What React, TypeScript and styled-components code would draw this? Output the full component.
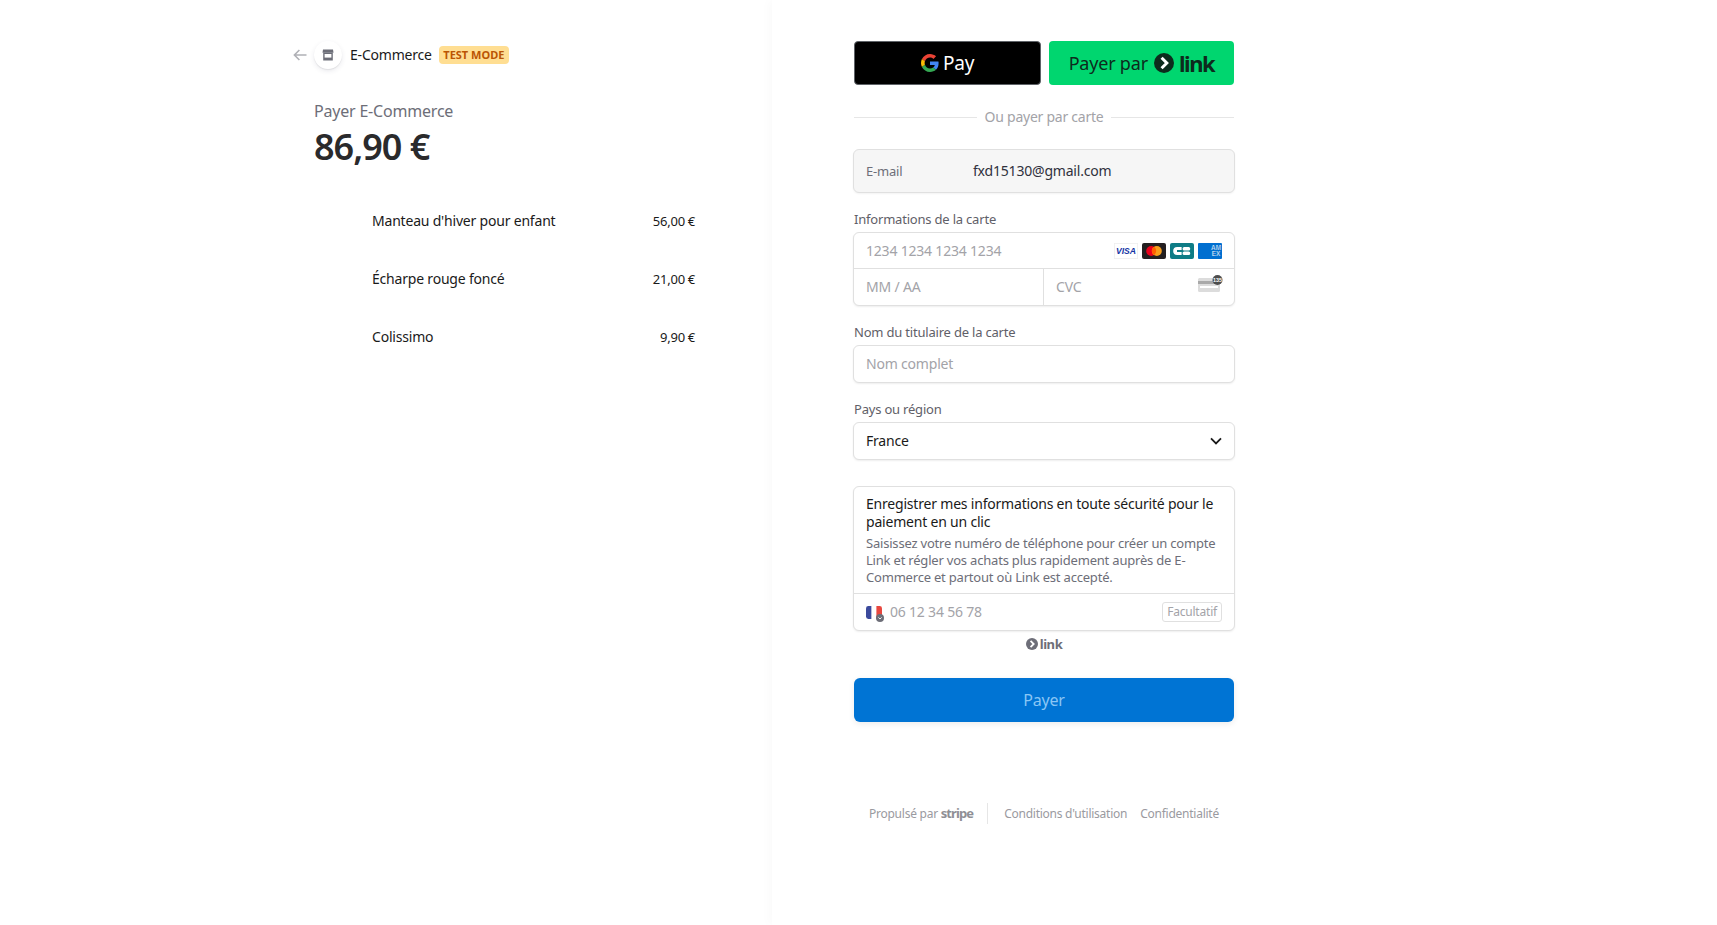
import React from 'react'
import styled, { createGlobalStyle } from 'styled-components'

const GlobalStyle = createGlobalStyle`
  html, body {
    margin: 0;
    padding: 0;
    background: #fff;
  }
  body {
    font-family: 'Noto Sans', 'Open Sans', sans-serif;
    color: #1a1a1a;
    letter-spacing: -0.2px;
  }
  * {
    box-sizing: border-box;
  }
`

const items = [
  { name: "Manteau d'hiver pour enfant", price: '56,00 €' },
  { name: 'Écharpe rouge foncé', price: '21,00 €' },
  { name: 'Colissimo', price: '9,90 €' }
]

const GoogleG = () => (
  <svg width="18" height="18" viewBox="0 0 48 48">
    <path fill="#EA4335" d="M24 9.5c3.5 0 6.7 1.2 9.2 3.6l6.9-6.9C35.9 2.4 30.5 0 24 0 14.6 0 6.5 5.4 2.6 13.2l8 6.2C12.4 13.7 17.7 9.5 24 9.5z" />
    <path fill="#4285F4" d="M46.9 24.5c0-1.6-.1-3.1-.4-4.5H24v9h12.9c-.6 3-2.2 5.5-4.7 7.2l7.7 6c4.5-4.2 7-10.3 7-17.7z" />
    <path fill="#FBBC05" d="M10.5 28.6c-.5-1.4-.8-3-.8-4.6s.3-3.2.8-4.6l-8-6.2C.9 16.5 0 20.1 0 24s.9 7.5 2.6 10.8l7.9-6.2z" />
    <path fill="#34A853" d="M24 48c6.5 0 11.9-2.1 15.9-5.8l-7.7-6c-2.2 1.4-4.9 2.3-8.2 2.3-6.3 0-11.6-4.2-13.5-10l-8 6.2C6.5 42.6 14.6 48 24 48z" />
  </svg>
)

const LinkMark = ({ size, color, arrow }: { size: number; color: string; arrow: string }) => (
  <svg width={size} height={size} viewBox="0 0 20 20">
    <circle cx="10" cy="10" r="10" fill={color} />
    <path d="M7.6 4.8 L12.8 10 L7.6 15.2" fill="none" stroke={arrow} strokeWidth="3" />
  </svg>
)

const StoreIcon = () => (
  <svg width="12" height="12" viewBox="0 0 12 12">
    <path d="M1 0.5h10l0.5 3.2H0.5z" fill="#6d6e78" />
    <path d="M1.2 3.7h9.6v7.8H1.2z" fill="#6d6e78" />
    <path d="M2.6 5h6.8v3.6H2.6z" fill="#fff" />
  </svg>
)

const BackArrow = () => (
  <svg width="14" height="12" viewBox="0 0 14 12">
    <path d="M13.5 6H1.5M6.4 1 1.4 6l5 5" fill="none" stroke="#b0b1b6" strokeWidth="1.6" />
  </svg>
)

const VisaIcon = () => (
  <svg width="24" height="16" viewBox="0 0 24 16">
    <rect x="0.25" y="0.25" width="23.5" height="15.5" rx="1" fill="#fff" stroke="#d9d9d9" strokeWidth="0.5" />
    <text x="12" y="11" textAnchor="middle" fontFamily="'Liberation Sans', sans-serif" fontSize="8.6" fontWeight="700" fontStyle="italic" letterSpacing="0" fill="#1434a4">VISA</text>
  </svg>
)

const MastercardIcon = () => (
  <svg width="24" height="16" viewBox="0 0 24 16">
    <rect width="24" height="16" rx="2" fill="#231f20" />
    <circle cx="9.2" cy="8" r="5" fill="#eb001b" />
    <circle cx="14.8" cy="8" r="5" fill="#f79e1b" />
    <path d="M12 3.85a5 5 0 0 1 0 8.3a5 5 0 0 1 0-8.3z" fill="#ff5f00" />
  </svg>
)

const CbIcon = () => (
  <svg width="24" height="16" viewBox="0 0 24 16">
    <rect width="24" height="16" rx="2" fill="#0e7c86" />
    <path d="M11.6 4h-4.4a4 4 0 0 0 0 8h4.4z" fill="#fff" />
    <rect x="12.6" y="4" width="7.6" height="3.6" rx="1.6" fill="#fff" />
    <rect x="12.6" y="8.4" width="7.6" height="3.6" rx="1.6" fill="#fff" />
    <rect x="7" y="7" width="5" height="2" fill="#0e7c86" />
  </svg>
)

const AmexIcon = () => (
  <svg width="24" height="16" viewBox="0 0 24 16">
    <rect width="24" height="16" rx="1" fill="#016fd0" />
    <text x="18" y="7.4" textAnchor="middle" fontFamily="'Liberation Sans', sans-serif" fontSize="6.4" fontWeight="700" letterSpacing="0" fill="#e3eff9" stroke="#016fd0" strokeWidth="0.2">AM</text>
    <text x="18" y="13.2" textAnchor="middle" fontFamily="'Liberation Sans', sans-serif" fontSize="6.4" fontWeight="700" letterSpacing="0" fill="#e3eff9" stroke="#016fd0" strokeWidth="0.2">EX</text>
  </svg>
)

const CvcIcon = () => (
  <svg width="26" height="18" viewBox="0 0 26 18">
    <rect x="1" y="3" width="22" height="14" rx="1.5" fill="#dcdcdc" />
    <rect x="1" y="6" width="22" height="3" fill="#a9a9a9" />
    <rect x="3" y="11" width="18" height="2" fill="#fff" />
    <circle cx="20.5" cy="5" r="5" fill="#4d4d4d" />
    <text x="20.5" y="7" textAnchor="middle" fontFamily="'Liberation Sans', sans-serif" fontSize="5.4" fontWeight="700" letterSpacing="0" fill="#fff">135</text>
  </svg>
)

const FlagFr = () => (
  <FlagWrap>
    <svg width="16" height="13" viewBox="0 0 16 13">
      <defs>
        <clipPath id="flag-clip">
          <rect width="16" height="13" rx="2.4" />
        </clipPath>
      </defs>
      <g clipPath="url(#flag-clip)">
        <rect width="5.6" height="13" fill="#3b4a9c" />
        <rect x="5.6" width="4.8" height="13" fill="#fff" />
        <rect x="10.4" width="5.6" height="13" fill="#e8473f" />
      </g>
    </svg>
    <FlagBadge>
      <svg width="8" height="8" viewBox="0 0 8 8">
        <circle cx="4" cy="4" r="4" fill="#6d6e78" />
        <path d="M2.4 3.4 4 5l1.6-1.6" fill="none" stroke="#fff" strokeWidth="0.9" />
      </svg>
    </FlagBadge>
  </FlagWrap>
)

const Chevron = () => (
  <svg width="12" height="8" viewBox="0 0 12 8">
    <path d="M1 1.4 6 6.4l5-5" fill="none" stroke="#1a1a1a" strokeWidth="1.8" />
  </svg>
)

const App: React.FC = () => {
  return (
    <>
      <GlobalStyle />
      <Page>
        <Overview>
          <Header>
            <BackArrow />
            <StoreBubble>
              <StoreIcon />
            </StoreBubble>
            <MerchantName>E-Commerce</MerchantName>
            <TestBadge>TEST MODE</TestBadge>
          </Header>
          <Summary>
            <PayLabel>Payer E-Commerce</PayLabel>
            <Amount>86,90 €</Amount>
          </Summary>
          <ItemList>
            {items.map((item) => (
              <ItemRow key={item.name}>
                <ItemName>{item.name}</ItemName>
                <ItemPrice>{item.price}</ItemPrice>
              </ItemRow>
            ))}
          </ItemList>
        </Overview>

        <Payment>
          <Column>
            <ExpressRow>
              <GPayButton>
                <GoogleG />
                <GPayText>Pay</GPayText>
              </GPayButton>
              <LinkButton>
                Payer par
                <LinkMark size={20} color="#0d2b1d" arrow="#fff" />
                <LinkWord>link</LinkWord>
              </LinkButton>
            </ExpressRow>

            <OrDivider>
              <OrLine />
              <OrText>Ou payer par carte</OrText>
              <OrLine />
            </OrDivider>

            <EmailBox>
              <EmailLabel>E-mail</EmailLabel>
              <EmailValue>fxd15130@gmail.com</EmailValue>
            </EmailBox>

            <FieldLabel>Informations de la carte</FieldLabel>
            <Box>
              <CardRow>
                <Placeholder>1234 1234 1234 1234</Placeholder>
                <CardIcons>
                  <VisaIcon />
                  <MastercardIcon />
                  <CbIcon />
                  <AmexIcon />
                </CardIcons>
              </CardRow>
              <SplitRow>
                <SplitCell>
                  <Placeholder>MM / AA</Placeholder>
                </SplitCell>
                <SplitCell $divided>
                  <Placeholder>CVC</Placeholder>
                  <CvcSlot>
                    <CvcIcon />
                  </CvcSlot>
                </SplitCell>
              </SplitRow>
            </Box>

            <FieldLabel>Nom du titulaire de la carte</FieldLabel>
            <InputBox>
              <Placeholder>Nom complet</Placeholder>
            </InputBox>

            <FieldLabel>Pays ou région</FieldLabel>
            <InputBox>
              <SelectValue>France</SelectValue>
              <Chevron />
            </InputBox>

            <LinkBox>
              <LinkCopy>
                <LinkTitle>Enregistrer mes informations en toute sécurité pour le paiement en un clic</LinkTitle>
                <LinkText>
                  Saisissez votre numéro de téléphone pour créer un compte Link et régler vos achats plus rapidement auprès de E-Commerce et partout où Link est accepté.
                </LinkText>
              </LinkCopy>
              <PhoneRow>
                <FlagFr />
                <PhonePlaceholder>06 12 34 56 78</PhonePlaceholder>
                <OptionalTag>Facultatif</OptionalTag>
              </PhoneRow>
            </LinkBox>

            <LinkFooter>
              <LinkMark size={12} color="#6d6e78" arrow="#fff" />
              <LinkFooterWord>link</LinkFooterWord>
            </LinkFooter>

            <PayButton>Payer</PayButton>

            <Footer>
              <PoweredBy>
                Propulsé par <StripeWord>stripe</StripeWord>
              </PoweredBy>
              <FooterSep />
              <FooterLinks>
                <span>Conditions d'utilisation</span>
                <span>Confidentialité</span>
              </FooterLinks>
            </Footer>
          </Column>
        </Payment>
      </Page>
    </>
  )
}

const Page = styled.div`
  display: flex;
  width: 100%;
  height: 925px;
  overflow: hidden;
  background: #fff;
`

const Overview = styled.div`
  width: 772px;
  flex-shrink: 0;
  padding: 41px 77px 0 293px;
`

const Header = styled.div`
  display: flex;
  align-items: center;
  height: 28px;
`

const StoreBubble = styled.div`
  width: 28px;
  height: 28px;
  margin-left: 7px;
  border-radius: 50%;
  background: #fff;
  box-shadow: 0 2px 5px rgba(50, 50, 93, 0.1), 0 1px 1px rgba(0, 0, 0, 0.07);
  display: flex;
  align-items: center;
  justify-content: center;
`

const MerchantName = styled.div`
  margin-left: 8px;
  padding-bottom: 1px;
  font-size: 14px;
  color: #1a1a1a;
`

const TestBadge = styled.div`
  margin-left: 7px;
  width: 70px;
  height: 18px;
  border-radius: 4px;
  background: #ffde92;
  color: #bb5504;
  font-size: 11px;
  font-weight: 700;
  letter-spacing: 0;
  line-height: 18px;
  text-align: center;
  white-space: nowrap;
`

const Summary = styled.div`
  padding: 30px 0 0 21px;
`

const PayLabel = styled.div`
  font-size: 16px;
  line-height: 24px;
  color: #6d6e78;
`

const Amount = styled.div`
  margin-top: 2px;
  font-size: 36px;
  line-height: 44px;
  font-weight: 600;
  letter-spacing: -1px;
  color: #2a2a2c;
`

const ItemList = styled.div`
  margin-top: 23px;
  padding-left: 79px;
`

const ItemRow = styled.div`
  display: flex;
  justify-content: space-between;
  align-items: center;
  height: 58px;
  padding-bottom: 2px;
`

const ItemName = styled.div`
  font-size: 14px;
  color: #1a1a1a;
`

const ItemPrice = styled.div`
  padding-top: 1px;
  font-size: 13px;
  word-spacing: -0.5px;
  color: #1a1a1a;
`

const Payment = styled.div`
  flex: 1;
  padding: 41px 0 0 81px;
  background: #fff;
  box-shadow: -3px 0 10px rgba(0, 0, 0, 0.025);
`

const Column = styled.div`
  width: 382px;
`

const ExpressRow = styled.div`
  display: flex;
  gap: 8px;
  padding: 0 1px;
`

const GPayButton = styled.div`
  flex: 1;
  height: 44px;
  border-radius: 4px;
  background: #000;
  border: 1px solid #5f6368;
  display: flex;
  align-items: center;
  justify-content: center;
  gap: 4px;
`

const GPayText = styled.span`
  color: #fff;
  font-size: 19px;
  line-height: 24px;
`

const LinkButton = styled.div`
  flex: 1;
  height: 44px;
  border-radius: 4px;
  background: #00d66f;
  color: #0d2b1d;
  font-size: 18px;
  display: flex;
  align-items: center;
  justify-content: center;
  gap: 6px;
`

const LinkWord = styled.span`
  font-size: 22px;
  font-weight: 700;
  line-height: 24px;
  letter-spacing: -1.4px;
  margin-left: -1px;
`

const OrDivider = styled.div`
  display: flex;
  align-items: center;
  height: 20px;
  margin-top: 22px;
  padding: 0 1px;
`

const OrLine = styled.div`
  flex: 1;
  height: 1px;
  background: #e6e6e6;
`

const OrText = styled.div`
  margin: 0 8px;
  padding-bottom: 2px;
  font-size: 14px;
  letter-spacing: -0.25px;
  color: #a3a3a8;
`

const EmailBox = styled.div`
  display: flex;
  align-items: center;
  height: 44px;
  margin-top: 22px;
  padding: 0 12px 1px;
  background: #f6f6f6;
  border: 1px solid #e0e0e0;
  border-radius: 6px;
  box-shadow: 0 1px 2px rgba(0, 0, 0, 0.05);
`

const EmailLabel = styled.div`
  width: 107px;
  font-size: 13px;
  color: #6d6e78;
`

const EmailValue = styled.div`
  font-size: 14px;
  color: #30313d;
`

const FieldLabel = styled.div`
  height: 16px;
  margin-top: 18px;
  margin-bottom: 5px;
  padding-left: 1px;
  font-size: 13px;
  line-height: 16px;
  color: #5f6068;
`

const Box = styled.div`
  background: #fff;
  border: 1px solid #e0e0e0;
  border-radius: 6px;
  box-shadow: 0 1px 2px rgba(0, 0, 0, 0.07);
  overflow: hidden;
`

const CardRow = styled.div`
  display: flex;
  align-items: center;
  justify-content: space-between;
  height: 36px;
  padding: 0 12px;
  border-bottom: 1px solid #e0e0e0;
`

const Placeholder = styled.div`
  padding-bottom: 1px;
  font-size: 14px;
  color: #a3a3a8;
`

const CardIcons = styled.div`
  display: flex;
  gap: 4px;
`

const SplitRow = styled.div`
  display: grid;
  grid-template-columns: 189px 1fr;
  height: 36px;
`

const SplitCell = styled.div<{ $divided?: boolean }>`
  display: flex;
  align-items: center;
  justify-content: space-between;
  padding: 0 12px;
  border-left: ${(p) => (p.$divided ? '1px solid #e0e0e0' : 'none')};
`

const CvcSlot = styled.div`
  display: flex;
  margin: -6px -1px 0 0;
`

const InputBox = styled(Box)`
  display: flex;
  align-items: center;
  justify-content: space-between;
  height: 38px;
  padding: 0 12px;
`

const SelectValue = styled.div`
  padding-bottom: 1px;
  font-size: 14px;
  color: #1a1a1a;
`

const LinkBox = styled(Box)`
  margin-top: 26px;
`

const LinkCopy = styled.div`
  padding: 8px 12px 0;
  height: 107px;
  border-bottom: 1px solid #e0e0e0;
`

const LinkTitle = styled.div`
  font-size: 14px;
  line-height: 18px;
  color: #1a1a1a;
`

const LinkText = styled.div`
  margin-top: 4px;
  font-size: 13px;
  line-height: 17px;
  color: #6d6e78;
`

const PhoneRow = styled.div`
  display: flex;
  align-items: center;
  height: 36px;
  padding: 0 12px;
`

const FlagWrap = styled.div`
  position: relative;
  display: flex;
  width: 16px;
  height: 13px;
`

const FlagBadge = styled.div`
  position: absolute;
  right: -2px;
  bottom: -3px;
  display: flex;
`

const PhonePlaceholder = styled.div`
  flex: 1;
  margin-left: 8px;
  padding-bottom: 1px;
  font-size: 14px;
  color: #a3a3a8;
`

const OptionalTag = styled.div`
  height: 20px;
  padding: 0 4px;
  border: 1px solid #e0e0e0;
  border-radius: 3px;
  font-size: 12px;
  line-height: 18px;
  color: #a3a3a8;
`

const LinkFooter = styled.div`
  display: flex;
  align-items: center;
  justify-content: center;
  gap: 2px;
  height: 14px;
  margin-top: 6px;
`

const LinkFooterWord = styled.span`
  font-size: 13px;
  font-weight: 700;
  line-height: 14px;
  letter-spacing: -0.4px;
  color: #6d6e78;
`

const PayButton = styled.div`
  height: 44px;
  margin: 27px 1px 0;
  border-radius: 6px;
  background: #0074d4;
  box-shadow: 0 2px 6px rgba(0, 0, 0, 0.08);
  color: #8ac6f5;
  font-size: 16px;
  line-height: 44px;
  text-align: center;
`

const Footer = styled.div`
  display: flex;
  align-items: center;
  justify-content: center;
  height: 22px;
  margin-top: 80px;
  font-size: 12px;
  letter-spacing: -0.25px;
  color: #9a9aa0;
`

const PoweredBy = styled.div`
  white-space: nowrap;
`

const StripeWord = styled.span`
  font-weight: 700;
  font-size: 13px;
  letter-spacing: -0.9px;
  color: #8f8f95;
`

const FooterSep = styled.div`
  width: 1px;
  height: 21px;
  margin: 0 16px 0 14px;
  background: #e6e6e6;
`

const FooterLinks = styled.div`
  display: flex;
  gap: 13px;
  white-space: nowrap;
`

export default App
